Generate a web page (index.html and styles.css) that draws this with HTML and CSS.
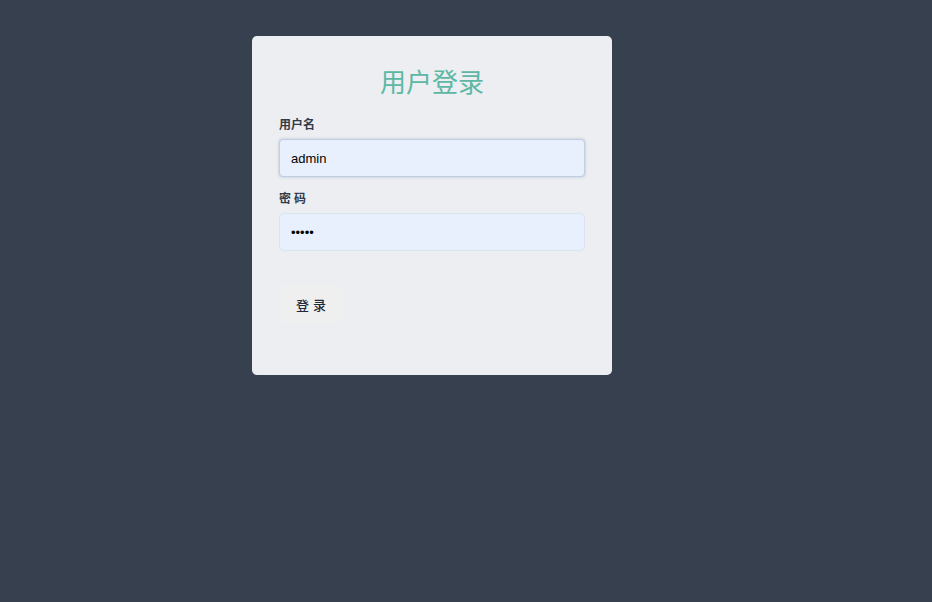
FILE: index.html
```html
<!DOCTYPE html>
<html lang="zh-CN">
<head>
<meta charset="utf-8">
<title>用户登录</title>
<link rel="stylesheet" href="styles.css">
</head>
<body>
<div class="page">
  <form class="card" onsubmit="return false;">
    <h2 class="title">用户登录</h2>
    <div class="field">
      <label class="label" for="u">用户名</label>
      <input id="u" class="input focused" type="text" value="admin" autofocus>
    </div>
    <div class="field">
      <label class="label spaced" for="p">密码</label>
      <input id="p" class="input" type="password" value="admin">
    </div>
    <div class="actions">
      <button class="btn" type="submit">登录</button>
    </div>
  </form>
</div>
</body>
</html>
```
FILE: styles.css
```css
html, body {
  margin: 0;
  padding: 0;
  height: 100%;
}
body {
  background: #36404e;
  font-family: "Liberation Sans", Arial, "Noto Sans CJK SC", sans-serif;
}
.page {
  display: flex;
  justify-content: flex-start;
  padding: 36px 0 0 252px;
}
.card {
  width: 360px;
  box-sizing: border-box;
  background: #eceef1;
  border-radius: 5px;
  padding: 27px 27px 52px;
  display: flex;
  flex-direction: column;
}
.title {
  margin: 0 0 16px;
  text-align: center;
  font-family: "Noto Sans CJK SC", sans-serif;
  font-weight: 400;
  font-size: 26px;
  line-height: 36px;
  color: #5cb8a5;
}
.field {
  display: flex;
  flex-direction: column;
  margin-bottom: 12px;
}
.label {
  font-family: "Noto Sans CJK SC", sans-serif;
  font-size: 12px;
  font-weight: 700;
  color: #313b49;
  line-height: 18px;
  margin-bottom: 6px;
}
.label.spaced {
  letter-spacing: 3px;
}
.input {
  height: 38px;
  box-sizing: border-box;
  border: 1px solid #dbe3ee;
  border-radius: 4px;
  background: #e8f0fe;
  padding: 0 11px;
  font-family: "Liberation Sans", Arial, sans-serif;
  font-size: 13px;
  color: #000;
  caret-color: #000;
  outline: none;
}
.input.focused {
  border-color: #c1cde0;
  box-shadow: 0 0 3px rgba(120, 140, 180, 0.45);
}
.actions {
  margin-top: 22px;
  display: flex;
}
.btn {
  width: 64px;
  height: 38px;
  border: none;
  border-radius: 3px;
  background: #efefef;
  font-family: "Noto Sans CJK SC", sans-serif;
  font-size: 13px;
  font-weight: 500;
  letter-spacing: 4px;
  padding: 0 0 0 4px;
  color: #1f2a38;
  cursor: pointer;
}
```
